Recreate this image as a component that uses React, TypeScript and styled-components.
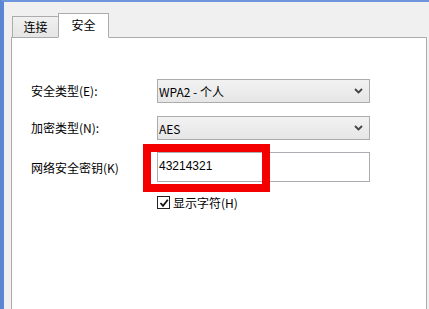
import styled, { createGlobalStyle } from 'styled-components';

const Global = createGlobalStyle`
  html, body { margin: 0; padding: 0; }
  body {
    width: 429px;
    height: 309px;
    overflow: hidden;
    font-family: "Noto Sans CJK SC", "Microsoft YaHei", "Liberation Sans", sans-serif;
    font-size: 12px;
    color: #000;
  }
`;

const Window = styled.div`
  box-sizing: border-box;
  width: 429px;
  height: 309px;
  background: #f0f0f0;
  border-left: 4px solid #5b86d3;
  border-top: 2px solid #6f95dc;
  padding: 10px 0 0 7px;
  display: flex;
  flex-direction: column;
  overflow: hidden;
`;

const TabStrip = styled.div`
  display: flex;
  align-items: flex-end;
  height: 25px;
  padding-left: 1px;
`;

const Tab = styled.div<{ active?: boolean }>`
  box-sizing: border-box;
  display: flex;
  align-items: center;
  justify-content: center;
  height: ${(p) => (p.active ? '25px' : '22px')};
  width: ${(p) => (p.active ? '51px' : '47px')};
  border: 1px solid #acacac;
  border-bottom: ${(p) => (p.active ? '1px solid #fff' : '1px solid #acacac')};
  background: ${(p) => (p.active ? '#fff' : 'linear-gradient(#f0f0f0, #e5e5e5)')};
  margin-right: ${(p) => (p.active ? '0' : '-1px')};
  position: relative;
  z-index: ${(p) => (p.active ? 2 : 1)};
  margin-bottom: -1px;
  font-size: 12px;
  padding-bottom: ${(p) => (p.active ? '3px' : '1px')};
`;

const Panel = styled.div`
  box-sizing: border-box;
  width: 416px;
  flex: 1;
  background: #fff;
  border: 1px solid #acacac;
  border-bottom: none;
  padding: 41px 0 0 19px;
`;

const Form = styled.div`
  display: grid;
  grid-template-columns: 126px 213px;
  row-gap: 13px;
  align-items: center;
`;

const Label = styled.div`
  font-size: 12px;
  line-height: 16px;
`;

const Select = styled.div`
  box-sizing: border-box;
  height: 24px;
  border: 1px solid #acacac;
  background: linear-gradient(#f2f2f2, #e6e6e6);
  display: flex;
  align-items: center;
  justify-content: space-between;
  padding: 0 6px 0 1px;
  font-size: 12px;
`;

const Chevron = () => (
  <svg width="9" height="6" viewBox="0 0 9 6">
    <path d="M1 1 L4.5 4.5 L8 1" fill="none" stroke="#444" strokeWidth="1.8" />
  </svg>
);

const InputWrap = styled.div`
  position: relative;
  margin-top: -1px;
`;

const Input = styled.div`
  box-sizing: border-box;
  height: 30px;
  border: 1px solid #abadb3;
  background: #fff;
  display: flex;
  align-items: center;
  padding: 0 1px 2px;
  font-family: "Liberation Sans", Arial, sans-serif;
  font-size: 12px;
`;

const Highlight = styled.div`
  position: absolute;
  left: -14px;
  top: -8px;
  width: 127px;
  height: 48px;
  box-sizing: border-box;
  border: 8px solid #f40000;
  pointer-events: none;
`;

const CheckRow = styled.label`
  grid-column: 2;
  display: flex;
  align-items: center;
  gap: 3px;
  margin-top: -1px;
  font-size: 12px;
`;

const Box = styled.span`
  box-sizing: border-box;
  width: 13px;
  height: 13px;
  border: 1px solid #222;
  background: #fff;
  display: flex;
  align-items: center;
  justify-content: center;
`;

export default function App() {
  return (
    <>
      <Global />
      <Window>
        <TabStrip>
          <Tab>连接</Tab>
          <Tab active>安全</Tab>
        </TabStrip>
        <Panel>
          <Form>
            <Label>安全类型(E):</Label>
            <Select>
              <span>WPA2 - 个人</span>
              <Chevron />
            </Select>
            <Label>加密类型(N):</Label>
            <Select>
              <span>AES</span>
              <Chevron />
            </Select>
            <Label>网络安全密钥(K)</Label>
            <InputWrap>
              <Input>43214321</Input>
              <Highlight />
            </InputWrap>
            <CheckRow>
              <Box>
                <svg width="10" height="10" viewBox="0 0 10 10">
                  <path d="M1.5 5 L4 7.8 L8.8 1.8" fill="none" stroke="#111" strokeWidth="1.8" />
                </svg>
              </Box>
              <span>显示字符(H)</span>
            </CheckRow>
          </Form>
        </Panel>
      </Window>
    </>
  );
}
